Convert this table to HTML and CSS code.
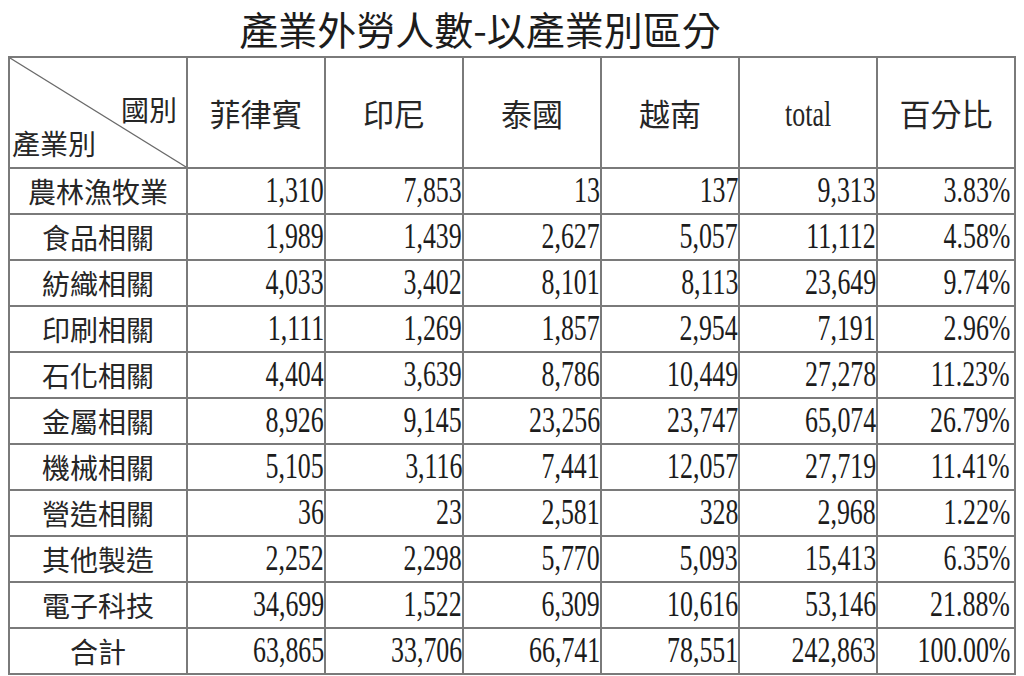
FILE: index.html
```html
<!DOCTYPE html>
<html lang="zh-Hant">
<head>
<meta charset="utf-8">
<title>產業外勞人數-以產業別區分</title>
<link rel="stylesheet" href="styles.css">
</head>
<body>
<div class="page">
  <h1 class="title">產業外勞人數-以產業別區分</h1>
  <table class="grid">
    <colgroup>
      <col class="c-label">
      <col class="c-num"><col class="c-num"><col class="c-num">
      <col class="c-num"><col class="c-num"><col class="c-num">
    </colgroup>
    <thead>
      <tr class="head-row">
        <th class="corner">
          <svg class="diag" viewBox="0 0 100 100" preserveAspectRatio="none" aria-hidden="true">
            <line x1="0" y1="0" x2="100" y2="100" vector-effect="non-scaling-stroke"/>
          </svg>
          <div class="corner-inner">
            <span class="corner-top">國別</span>
            <span class="corner-bottom">產業別</span>
          </div>
        </th>
        <th class="hd">菲律賓</th>
        <th class="hd">印尼</th>
        <th class="hd">泰國</th>
        <th class="hd">越南</th>
        <th class="hd"><span class="n n-center">total</span></th>
        <th class="hd">百分比</th>
      </tr>
    </thead>
    <tbody>
      <tr><td class="lbl">農林漁牧業</td><td class="v"><span class="n">1,310</span></td><td class="v"><span class="n">7,853</span></td><td class="v"><span class="n">13</span></td><td class="v"><span class="n">137</span></td><td class="v"><span class="n">9,313</span></td><td class="v pct"><span class="n">3.83%</span></td></tr>
      <tr><td class="lbl">食品相關</td><td class="v"><span class="n">1,989</span></td><td class="v"><span class="n">1,439</span></td><td class="v"><span class="n">2,627</span></td><td class="v"><span class="n">5,057</span></td><td class="v"><span class="n">11,112</span></td><td class="v pct"><span class="n">4.58%</span></td></tr>
      <tr><td class="lbl">紡織相關</td><td class="v"><span class="n">4,033</span></td><td class="v"><span class="n">3,402</span></td><td class="v"><span class="n">8,101</span></td><td class="v"><span class="n">8,113</span></td><td class="v"><span class="n">23,649</span></td><td class="v pct"><span class="n">9.74%</span></td></tr>
      <tr><td class="lbl">印刷相關</td><td class="v"><span class="n">1,111</span></td><td class="v"><span class="n">1,269</span></td><td class="v"><span class="n">1,857</span></td><td class="v"><span class="n">2,954</span></td><td class="v"><span class="n">7,191</span></td><td class="v pct"><span class="n">2.96%</span></td></tr>
      <tr><td class="lbl">石化相關</td><td class="v"><span class="n">4,404</span></td><td class="v"><span class="n">3,639</span></td><td class="v"><span class="n">8,786</span></td><td class="v"><span class="n">10,449</span></td><td class="v"><span class="n">27,278</span></td><td class="v pct"><span class="n">11.23%</span></td></tr>
      <tr><td class="lbl">金屬相關</td><td class="v"><span class="n">8,926</span></td><td class="v"><span class="n">9,145</span></td><td class="v"><span class="n">23,256</span></td><td class="v"><span class="n">23,747</span></td><td class="v"><span class="n">65,074</span></td><td class="v pct"><span class="n">26.79%</span></td></tr>
      <tr><td class="lbl">機械相關</td><td class="v"><span class="n">5,105</span></td><td class="v"><span class="n">3,116</span></td><td class="v"><span class="n">7,441</span></td><td class="v"><span class="n">12,057</span></td><td class="v"><span class="n">27,719</span></td><td class="v pct"><span class="n">11.41%</span></td></tr>
      <tr><td class="lbl">營造相關</td><td class="v"><span class="n">36</span></td><td class="v"><span class="n">23</span></td><td class="v"><span class="n">2,581</span></td><td class="v"><span class="n">328</span></td><td class="v"><span class="n">2,968</span></td><td class="v pct"><span class="n">1.22%</span></td></tr>
      <tr><td class="lbl">其他製造</td><td class="v"><span class="n">2,252</span></td><td class="v"><span class="n">2,298</span></td><td class="v"><span class="n">5,770</span></td><td class="v"><span class="n">5,093</span></td><td class="v"><span class="n">15,413</span></td><td class="v pct"><span class="n">6.35%</span></td></tr>
      <tr><td class="lbl">電子科技</td><td class="v"><span class="n">34,699</span></td><td class="v"><span class="n">1,522</span></td><td class="v"><span class="n">6,309</span></td><td class="v"><span class="n">10,616</span></td><td class="v"><span class="n">53,146</span></td><td class="v pct"><span class="n">21.88%</span></td></tr>
      <tr><td class="lbl">合計</td><td class="v"><span class="n">63,865</span></td><td class="v"><span class="n">33,706</span></td><td class="v"><span class="n">66,741</span></td><td class="v"><span class="n">78,551</span></td><td class="v"><span class="n">242,863</span></td><td class="v pct"><span class="n">100.00%</span></td></tr>
    </tbody>
  </table>
</div>
</body>
</html>
```

FILE: styles.css
```css
html, body {
  margin: 0;
  padding: 0;
  background: #ffffff;
}

body {
  font-family: "Liberation Serif", "Noto Sans CJK TC", serif;
  color: #1c1c1c;
}

.page {
  width: 1024px;
  height: 676px;
  overflow: hidden;
  padding-left: 8px;
  box-sizing: border-box;
}

.title {
  margin: 0;
  width: 944px;
  height: 56px;
  line-height: 56px;
  font-family: "Noto Sans CJK TC", sans-serif;
  font-size: 39px;
  font-weight: 400;
  text-align: center;
  color: #1c1c1c;
  overflow: visible;
}

.grid {
  border-collapse: collapse;
  table-layout: fixed;
  width: 1008px;
}

.c-label { width: 178px; }
.c-num { width: 138px; }

.grid th,
.grid td {
  border: 2px solid #7a7a7a;
  padding: 0;
  overflow: visible;
}

.head-row {
  height: 111px;
}

.grid tbody tr {
  height: 46px;
}

.corner {
  position: relative;
  vertical-align: bottom;
}

.diag {
  position: absolute;
  left: 0;
  top: 0;
  width: 100%;
  height: 100%;
  overflow: visible;
}

.diag line {
  stroke: #6a6a6a;
  stroke-width: 1.4;
}

.corner-inner {
  display: flex;
  flex-direction: column;
  font-family: "Noto Sans CJK TC", sans-serif;
  font-size: 28px;
  font-weight: 400;
  line-height: 34px;
  padding: 0 9px 7px 2px;
  color: #262626;
}

.corner-top {
  text-align: right;
}

.corner-bottom {
  text-align: left;
}

.hd {
  font-family: "Noto Sans CJK TC", sans-serif;
  font-size: 31px;
  font-weight: 400;
  text-align: center;
  vertical-align: middle;
  color: #262626;
}

.hd .n {
  font-family: "Liberation Serif", serif;
  font-size: 35px;
}

.lbl {
  font-family: "Noto Sans CJK TC", sans-serif;
  font-size: 28px;
  font-weight: 400;
  text-align: center;
  vertical-align: middle;
  padding-top: 3px;
  line-height: 40px;
  color: #262626;
}

.v {
  text-align: right;
  vertical-align: middle;
  font-size: 35px;
  line-height: 40px;
  padding: 4px 1px 0 0;
  white-space: nowrap;
}

.v.pct {
  padding-right: 4px;
}

.n {
  display: inline-block;
  transform: scaleX(0.74);
  transform-origin: right center;
  white-space: nowrap;
}

.n-center {
  transform-origin: center center;
}
```
